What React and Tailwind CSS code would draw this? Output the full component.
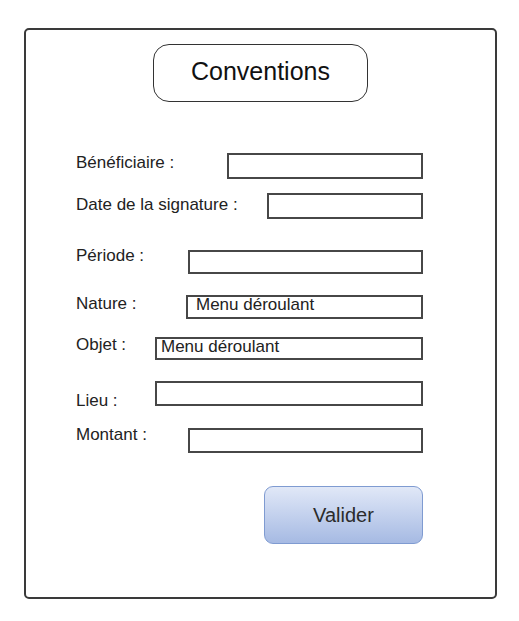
const rows = [
  { label: 'Bénéficiaire :', labelW: 'w-[151px]', mt: 'mt-[51px]', labelMt: 'mt-0', inputMt: 'mt-0', inputH: 'h-[26px]' },
  { label: 'Date de la signature :', labelW: 'w-[191px]', mt: 'mt-[14px]', labelMt: 'mt-[2px]', inputMt: 'mt-0', inputH: 'h-[26px]' },
  { label: 'Période :', labelW: 'w-[112px]', mt: 'mt-[27px]', labelMt: 'mt-0', inputMt: 'mt-[4px]', inputH: 'h-[24px]' },
  { label: 'Nature :', labelW: 'w-[110px]', mt: 'mt-[20px]', labelMt: 'mt-0', inputMt: 'mt-[1px]', inputH: 'h-[24px]', value: 'Menu déroulant', pad: 'pl-[8px]' },
  { label: 'Objet :', labelW: 'w-[79px]', mt: 'mt-[16px]', labelMt: 'mt-0', inputMt: 'mt-[2px]', inputH: 'h-[23px]', value: 'Menu déroulant', pad: 'pl-[4px]' },
  { label: 'Lieu :', labelW: 'w-[79px]', mt: 'mt-[21px]', labelMt: 'mt-[10px]', inputMt: 'mt-0', inputH: 'h-[25px]' },
  { label: 'Montant :', labelW: 'w-[112px]', mt: 'mt-[14px]', labelMt: 'mt-0', inputMt: 'mt-[3px]', inputH: 'h-[25px]' },
];

function Row({ row }) {
  return (
    <div className={`flex items-start ${row.mt}`}>
      <span className={`${row.labelW} ${row.labelMt} shrink-0 text-[17px] leading-[20px] text-[#222]`}>
        {row.label}
      </span>
      <div
        className={`${row.inputMt} ${row.inputH} ${row.pad || ''} flex-1 border-2 border-[#474747] bg-white text-[17px] leading-[16px] text-[#222]`}
      >
        {row.value}
      </div>
    </div>
  );
}

export default function App() {
  return (
    <div
      className="w-[519px] h-[621px] bg-white pt-[28px] pl-[24px]"
      style={{ fontFamily: '"Liberation Sans", Arial, sans-serif' }}
    >
      <div className="w-[473px] h-[571px] border-2 border-[#3a3a3a] rounded-[5px] flex flex-col pl-[50px] pr-[72px]">
        {/* Title pill */}
        <div className="self-center -ml-[50px] -mr-[72px] mt-[14px] w-[215px] h-[58px] border border-[#333] rounded-[16px] flex items-center justify-center">
          <span className="text-[25px] leading-none text-[#111] -mt-[4px]">Conventions</span>
        </div>

        {rows.map((row) => (
          <Row key={row.label} row={row} />
        ))}

        <div className="flex justify-end mt-[33px]">
          <button
            type="button"
            className="w-[159px] h-[58px] rounded-[9px] border border-[#7f9bd1] bg-gradient-to-b from-[#e1e8f7] to-[#a6bae3] text-[20px] text-[#2b2b2b]"
          >
            Valider
          </button>
        </div>
      </div>
    </div>
  );
}
